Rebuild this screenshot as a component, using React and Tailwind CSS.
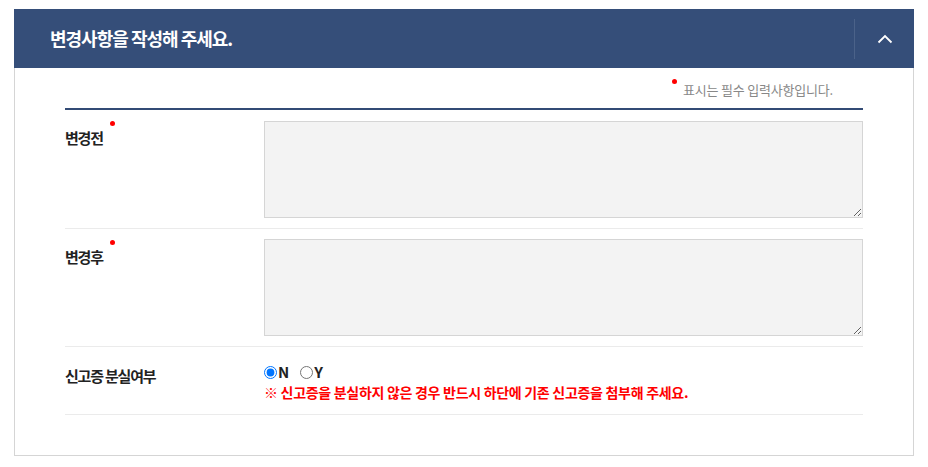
import React from "react";

const FONT = { fontFamily: '"Noto Sans CJK KR", "Noto Sans", sans-serif' };

function Dot({ className = "" }) {
  return <span className={`block h-[5px] w-[5px] shrink-0 rounded-full bg-[#ff0000] ${className}`} />;
}

function TextRow({ label, first }) {
  return (
    <div className="flex border-b border-[#ebebeb]">
      <div className="flex w-[199px] shrink-0 items-start pt-[17px]">
        <span className="text-[15px] font-bold leading-[22px] tracking-[-1.2px] text-[#222]">{label}</span>
        <Dot className="ml-[7px] mt-[-6px]" />
      </div>
      <div className={`flex-1 pb-[10px] ${first ? "pt-[11px]" : "pt-[10px]"}`}>
        <textarea className="block h-[97px] w-full border border-[#d5d5d5] bg-[#f3f3f3] outline-none" />
      </div>
    </div>
  );
}

export default function App() {
  return (
    <div className="bg-white pl-[14px] pt-[9px]" style={FONT}>
      <div className="w-[900px]">
        <div className="flex h-[59px] items-center bg-[#354e79]">
          <div className="flex-1 pl-[36px] text-[18px] font-bold tracking-[-1px] text-white">
            변경사항을 작성해 주세요.
          </div>
          <div className="flex h-[40px] w-[60px] items-center justify-center border-l border-[#4b6289]">
            <svg width="16" height="10" viewBox="0 0 16 10" fill="none">
              <path d="M1.5 8.5 L8 2 L14.5 8.5" stroke="white" strokeWidth="1.8" />
            </svg>
          </div>
        </div>
        <div className="border border-t-0 border-[#d5d5d5] px-[50px] pb-[40px]">
          <div className="flex items-start justify-end border-b-2 border-[#334b75] pb-[8px] pr-[30px] pt-[12px]">
            <Dot className="mr-[6px] mt-[-1px]" />
            <span className="text-[13px] leading-[20px] tracking-[-0.2px] text-[#888]">
              표시는 필수 입력사항입니다.
            </span>
          </div>
          <TextRow label="변경전" first />
          <TextRow label="변경후" />
          <div className="flex border-b border-[#ebebeb]">
            <div className="w-[199px] shrink-0 pt-[16px]">
              <span className="text-[15px] font-bold leading-[22px] tracking-[-1.2px] text-[#222]">
                신고증 분실여부
              </span>
            </div>
            <div className="flex-1 pb-[12px] pt-[15px]">
              <div className="flex h-[20px] items-center">
                <input type="radio" name="lost" defaultChecked className="m-0 h-[13px] w-[13px]" />
                <span className="ml-[1px] text-[15px] font-bold text-[#222]">N</span>
                <input type="radio" name="lost" className="m-0 ml-[11px] h-[13px] w-[13px]" />
                <span className="ml-[1px] text-[15px] font-bold text-[#222]">Y</span>
              </div>
              <div className="text-[14px] font-bold leading-[20px] tracking-[-0.3px] text-[#ff0000]">
                ※ 신고증을 분실하지 않은 경우 반드시 하단에 기존 신고증을 첨부해 주세요.
              </div>
            </div>
          </div>
        </div>
      </div>
    </div>
  );
}
